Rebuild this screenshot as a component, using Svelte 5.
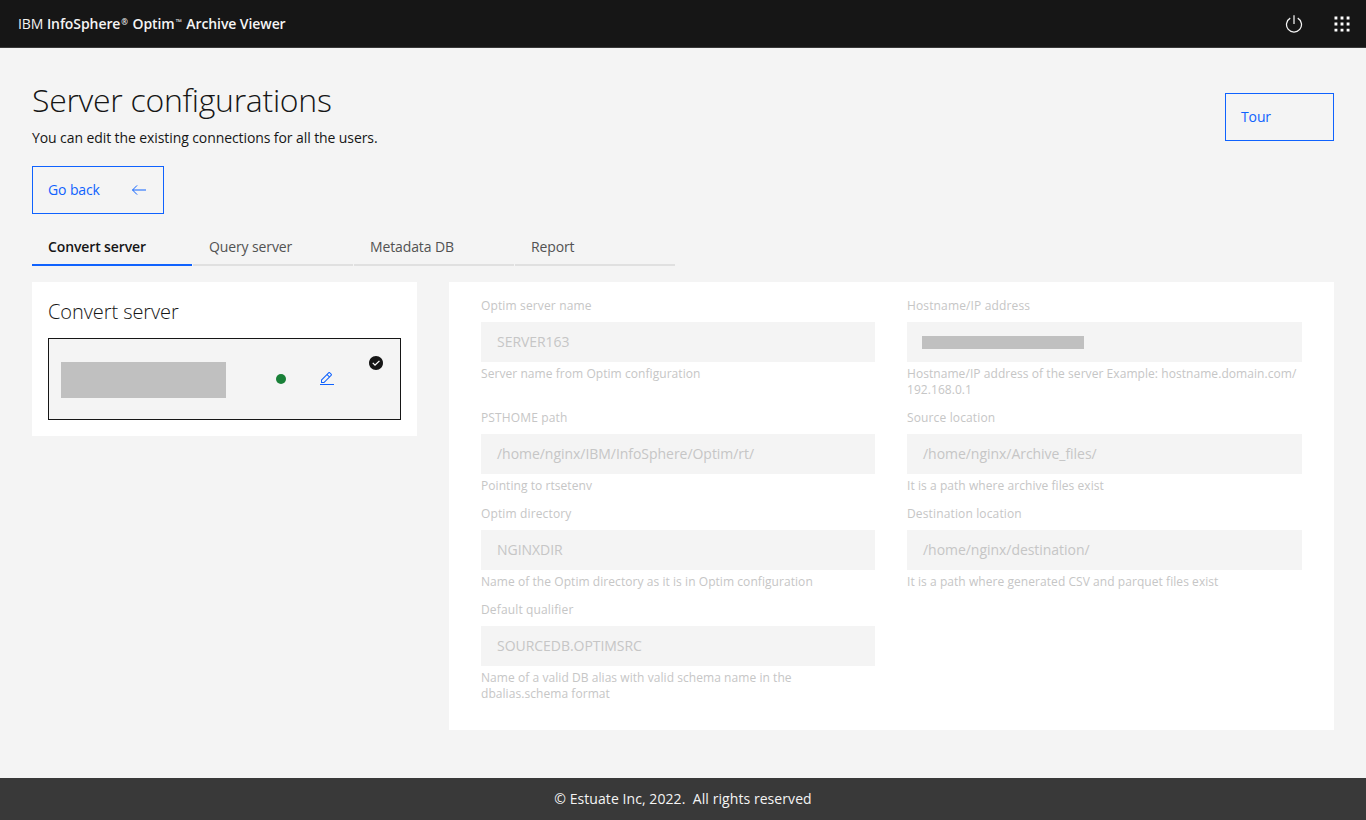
<script>
  const tabs = ['Convert server', 'Query server', 'Metadata DB', 'Report'];
  const left = [
    { label: 'Optim server name', value: 'SERVER163', help: 'Server name from Optim configuration', tall: true },
    { label: 'PSTHOME path', value: '/home/nginx/IBM/InfoSphere/Optim/rt/', help: 'Pointing to rtsetenv' },
    { label: 'Optim directory', value: 'NGINXDIR', help: 'Name of the Optim directory as it is in Optim configuration' },
    { label: 'Default qualifier', value: 'SOURCEDB.OPTIMSRC', help: 'Name of a valid DB alias with valid schema name in the dbalias.schema format' }
  ];
  const right = [
    { label: 'Hostname/IP address', masked: true, help: 'Hostname/IP address of the server Example: hostname.domain.com/ 192.168.0.1' },
    { label: 'Source location', value: '/home/nginx/Archive_files/', help: 'It is a path where archive files exist' },
    { label: 'Destination location', value: '/home/nginx/destination/', help: 'It is a path where generated CSV and parquet files exist' }
  ];
</script>

{#snippet field(f)}
  <div class="field" class:tall={f.tall}>
    <div class="label">{f.label}</div>
    <div class="input">
      {#if f.masked}<span class="mask"></span>{:else}{f.value}{/if}
    </div>
    <div class="help">{f.help}</div>
  </div>
{/snippet}

<div class="page">
  <header class="top">
    <div class="brand">IBM <b>InfoSphere<span class="mark">®</span> Optim<span class="mark">™</span> Archive Viewer</b></div>
    <div class="actions">
      <svg class="ic" viewBox="0 0 32 32" fill="#f4f4f4"><path d="M22.5 5.74l-1 1.73a11 11 0 1 1-11 0l-1-1.73a13 13 0 1 0 13 0Z"/><path d="M15 2H17V16H15z"/></svg>
      <svg class="ic" viewBox="0 0 32 32" fill="#fff"><path d="M4 4H8.6V8.6H4zM13.7 4H18.3V8.6H13.7zM23.4 4H28V8.6H23.4zM4 13.7H8.6V18.3H4zM13.7 13.7H18.3V18.3H13.7zM23.4 13.7H28V18.3H23.4zM4 23.4H8.6V28H4zM13.7 23.4H18.3V28H13.7zM23.4 23.4H28V28H23.4z"/></svg>
    </div>
  </header>

  <main class="main">
    <div class="head">
      <div>
        <h1>Server configurations</h1>
        <p>You can edit the existing connections for all the users.</p>
      </div>
      <button class="btn tour">Tour</button>
    </div>

    <button class="btn back">
      Go back
      <svg viewBox="0 0 16 16" width="16" height="16" fill="none" stroke="#0f62fe" stroke-width="1"><path d="M15 8H1.500M6.100 3.400L1.500 8l4.600 4.600"/></svg>
    </button>

    <div class="tabs">
      {#each tabs as t, i}
        <div class="tab" class:active={i === 0}>{t}</div>
      {/each}
    </div>

    <div class="content">
      <section class="card">
        <h2>Convert server</h2>
        <div class="server">
          <span class="name"></span>
          <span class="dot"></span>
          <svg class="edit" viewBox="0 0 32 32" width="16" height="16" fill="#0f62fe"><path d="M2 26H30V28H2zM25.4 9c.8-.8.8-2 0-2.8l-3.6-3.6c-.8-.8-2-.8-2.8 0l-15 15V24h6.4L25.4 9zM20.4 4L24 7.6l-3 3L17.4 7 20.4 4zM6 22v-3.6l10-10 3.6 3.6-10 10H6z"/></svg>
          <svg class="check" viewBox="0 0 16 16" width="16" height="16" fill="#161616"><path d="M8 1C4.100 1 1 4.100 1 8s3.100 7 7 7 7-3.100 7-7S11.900 1 8 1z"/><path fill="#fff" d="M7 11L4.300 8.300l.9-.8L7 9.300l4-3.900.9.800L7 11z"/></svg>
        </div>
      </section>

      <section class="form">
        <div class="col">{#each left as f}{@render field(f)}{/each}</div>
        <div class="col">{#each right as f}{@render field(f)}{/each}</div>
      </section>
    </div>
  </main>

  <footer class="foot">© Estuate Inc, 2022.&nbsp; All rights reserved</footer>
</div>

<style>
  :global(body) { margin: 0; background: #f4f4f4; }
  .page {
    min-height: 820px; display: flex; flex-direction: column;
    font-family: "Open Sans", "Noto Sans", sans-serif; color: #161616;
  }
  .top {
    height: 47px; background: #161616; border-bottom: 1px solid #393939;
    display: flex; align-items: center; justify-content: space-between;
    padding: 0 14px 0 18px; color: #f4f4f4;
  }
  .brand { font-size: 14px; letter-spacing: -.08px; }
  .brand b { font-weight: 600; }
  .mark { font-size: 8px; vertical-align: 4px; margin: 0 1px; }
  .actions { display: flex; gap: 28px; }
  .ic { width: 20px; height: 20px; display: block; }
  .main { flex: 1; padding: 32px 32px 0; }
  .head { display: flex; justify-content: space-between; align-items: flex-start; }
  h1 { margin: 0; font-size: 32px; line-height: 40px; font-weight: 300; letter-spacing: -.29px; }
  p { margin: 8px 0 0; font-size: 14px; line-height: 20px; letter-spacing: -.09px; }
  .btn {
    font: inherit; font-size: 14px; line-height: 20px; letter-spacing: -.12px;
    color: #0f62fe; background: transparent; border: 1px solid #0f62fe;
    height: 48px; box-sizing: border-box; text-align: left; padding: 0 16px 0 15px;
  }
  .tour { width: 109px; margin-top: 13px; }
  .back { display: flex; align-items: center; justify-content: space-between; width: 132px; margin-top: 18px; }
  .tabs { display: flex; gap: 1px; margin-top: 18px; }
  .tab {
    width: 160px; height: 34px; box-sizing: border-box; padding: 5px 16px 0;
    font-size: 14px; line-height: 20px; letter-spacing: -.12px; color: #525252;
    border-bottom: 2px solid #e0e0e0;
  }
  .tab.active { color: #161616; font-weight: 600; border-bottom-color: #0f62fe; }
  .content { display: flex; align-items: flex-start; justify-content: space-between; margin-top: 16px; }
  .card { width: 385px; height: 154px; box-sizing: border-box; background: #fff; padding: 16px; }
  h2 { margin: 0 0 12px; font-size: 20px; line-height: 28px; font-weight: 300; letter-spacing: -.08px; }
  .server {
    position: relative; height: 82px; box-sizing: border-box; border: 1px solid #161616;
    background: #f4f4f4; display: flex; align-items: center; padding-left: 12px;
  }
  .name { width: 165px; height: 36px; background: #c0c0c0; margin-top: 2px; }
  .dot { width: 10px; height: 10px; border-radius: 50%; background: #198038; margin-left: 50px; }
  .edit { margin-left: 33px; }
  .check { position: absolute; top: 16px; right: 16px; }
  .form {
    width: 885px; height: 448px; box-sizing: border-box; background: #fff;
    padding: 16px 32px 0; display: grid; grid-template-columns: 394px 1fr; column-gap: 32px;
  }
  .field { margin-bottom: 12px; }
  .field.tall { min-height: 100px; }
  .label { font-size: 12px; line-height: 16px; color: #c6c6c6; letter-spacing: .14px; }
  .help { font-size: 12px; line-height: 16px; color: #c6c6c6; letter-spacing: .06px; }
  .input {
    height: 40px; margin: 8px 0 4px; background: #f4f4f4; color: #c6c6c6;
    font-size: 14px; letter-spacing: -.04px; line-height: 40px; padding: 0 16px;
    display: flex; align-items: center;
  }
  .mask { width: 162px; height: 13px; background: #c0c0c0; margin-left: -1px; }
  .foot {
    height: 42px; box-sizing: border-box; padding-bottom: 1px; background: #393939; color: #f4f4f4;
    font-size: 14px; letter-spacing: .07px;
    display: flex; align-items: center; justify-content: center;
  }
</style>
